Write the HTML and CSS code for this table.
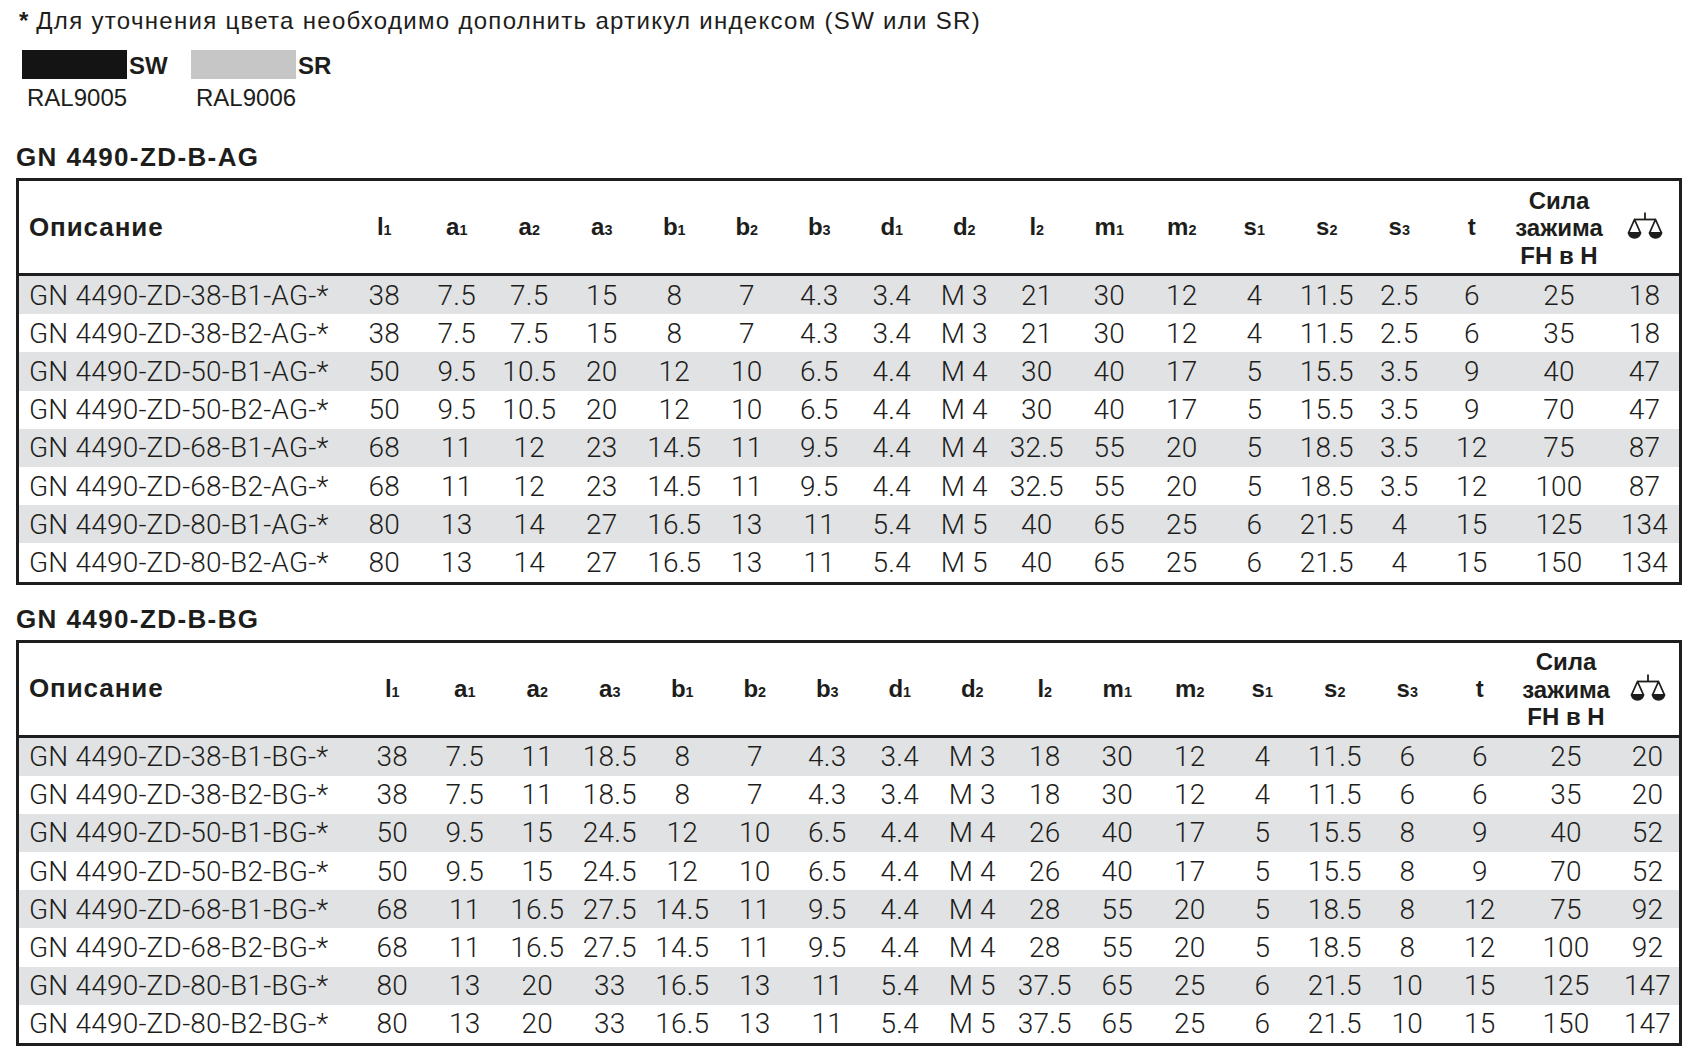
FILE: index.html
```html
<!DOCTYPE html>
<html lang="ru">
<head>
<meta charset="utf-8">
<title>GN 4490-ZD</title>
<link rel="stylesheet" href="styles.css">
</head>
<body>
<div class="page">
  <p class="note"><b class="star">*</b> Для уточнения цвета необходимо дополнить артикул индексом (SW или SR)</p>
  <div class="swatches">
    <div class="swatch">
      <div class="swatch-row"><span class="chip chip-black"></span><span class="code">SW</span></div>
      <div class="ral">RAL9005</div>
    </div>
    <div class="swatch">
      <div class="swatch-row"><span class="chip chip-silver"></span><span class="code">SR</span></div>
      <div class="ral">RAL9006</div>
    </div>
  </div>

  <h2 class="heading heading-first">GN 4490-ZD-B-AG</h2>
  <table class="spec spec-ag">
    <colgroup>
      <col class="c-desc"><col class="c-num"><col class="c-num"><col class="c-num"><col class="c-num"><col class="c-num"><col class="c-num"><col class="c-num"><col class="c-num"><col class="c-num"><col class="c-num"><col class="c-num"><col class="c-num"><col class="c-num"><col class="c-num"><col class="c-num"><col class="c-num"><col class="c-force"><col class="c-weight">
    </colgroup>
    <thead>
      <tr>
        <th class="th-desc">Описание</th>
        <th>l<span class="ix">1</span></th><th>a<span class="ix">1</span></th><th>a<span class="ix">2</span></th><th>a<span class="ix">3</span></th>
        <th>b<span class="ix">1</span></th><th>b<span class="ix">2</span></th><th>b<span class="ix">3</span></th><th>d<span class="ix">1</span></th>
        <th>d<span class="ix">2</span></th><th>l<span class="ix">2</span></th><th>m<span class="ix">1</span></th><th>m<span class="ix">2</span></th>
        <th>s<span class="ix">1</span></th><th>s<span class="ix">2</span></th><th>s<span class="ix">3</span></th><th>t</th>
        <th class="th-force">Сила<br>зажима<br>FH в H</th>
        <th class="th-weight"><svg class="scale-icon" viewBox="0 0 36 30" width="36" height="30" aria-label="вес"><g fill="none" stroke="#1d1d1b" stroke-width="1.8" stroke-linejoin="round"><path d="M18 0.5V7.5"/><path d="M7.5 7.5H28.5"/><path d="M7.5 7.5L1.5 21H13.5Z"/><path d="M28.5 7.5L22.5 21H34.5Z"/></g><g fill="#1d1d1b"><path d="M0.8 20.6H14.2A6.7 6.2 0 0 1 0.8 20.6Z"/><path d="M21.8 20.6H35.2A6.7 6.2 0 0 1 21.8 20.6Z"/></g></svg></th>
      </tr>
    </thead>
    <tbody>
      <tr><td class="td-desc">GN 4490-ZD-38-B1-AG-*</td><td>38</td><td>7.5</td><td>7.5</td><td>15</td><td>8</td><td>7</td><td>4.3</td><td>3.4</td><td>M 3</td><td>21</td><td>30</td><td>12</td><td>4</td><td>11.5</td><td>2.5</td><td>6</td><td>25</td><td>18</td></tr>
      <tr><td class="td-desc">GN 4490-ZD-38-B2-AG-*</td><td>38</td><td>7.5</td><td>7.5</td><td>15</td><td>8</td><td>7</td><td>4.3</td><td>3.4</td><td>M 3</td><td>21</td><td>30</td><td>12</td><td>4</td><td>11.5</td><td>2.5</td><td>6</td><td>35</td><td>18</td></tr>
      <tr><td class="td-desc">GN 4490-ZD-50-B1-AG-*</td><td>50</td><td>9.5</td><td>10.5</td><td>20</td><td>12</td><td>10</td><td>6.5</td><td>4.4</td><td>M 4</td><td>30</td><td>40</td><td>17</td><td>5</td><td>15.5</td><td>3.5</td><td>9</td><td>40</td><td>47</td></tr>
      <tr><td class="td-desc">GN 4490-ZD-50-B2-AG-*</td><td>50</td><td>9.5</td><td>10.5</td><td>20</td><td>12</td><td>10</td><td>6.5</td><td>4.4</td><td>M 4</td><td>30</td><td>40</td><td>17</td><td>5</td><td>15.5</td><td>3.5</td><td>9</td><td>70</td><td>47</td></tr>
      <tr><td class="td-desc">GN 4490-ZD-68-B1-AG-*</td><td>68</td><td>11</td><td>12</td><td>23</td><td>14.5</td><td>11</td><td>9.5</td><td>4.4</td><td>M 4</td><td>32.5</td><td>55</td><td>20</td><td>5</td><td>18.5</td><td>3.5</td><td>12</td><td>75</td><td>87</td></tr>
      <tr><td class="td-desc">GN 4490-ZD-68-B2-AG-*</td><td>68</td><td>11</td><td>12</td><td>23</td><td>14.5</td><td>11</td><td>9.5</td><td>4.4</td><td>M 4</td><td>32.5</td><td>55</td><td>20</td><td>5</td><td>18.5</td><td>3.5</td><td>12</td><td>100</td><td>87</td></tr>
      <tr><td class="td-desc">GN 4490-ZD-80-B1-AG-*</td><td>80</td><td>13</td><td>14</td><td>27</td><td>16.5</td><td>13</td><td>11</td><td>5.4</td><td>M 5</td><td>40</td><td>65</td><td>25</td><td>6</td><td>21.5</td><td>4</td><td>15</td><td>125</td><td>134</td></tr>
      <tr><td class="td-desc">GN 4490-ZD-80-B2-AG-*</td><td>80</td><td>13</td><td>14</td><td>27</td><td>16.5</td><td>13</td><td>11</td><td>5.4</td><td>M 5</td><td>40</td><td>65</td><td>25</td><td>6</td><td>21.5</td><td>4</td><td>15</td><td>150</td><td>134</td></tr>
    </tbody>
  </table>

  <h2 class="heading">GN 4490-ZD-B-BG</h2>
  <table class="spec spec-bg">
    <colgroup>
      <col class="c-desc"><col class="c-num"><col class="c-num"><col class="c-num"><col class="c-num"><col class="c-num"><col class="c-num"><col class="c-num"><col class="c-num"><col class="c-num"><col class="c-num"><col class="c-num"><col class="c-num"><col class="c-num"><col class="c-num"><col class="c-num"><col class="c-num"><col class="c-force"><col class="c-weight">
    </colgroup>
    <thead>
      <tr>
        <th class="th-desc">Описание</th>
        <th>l<span class="ix">1</span></th><th>a<span class="ix">1</span></th><th>a<span class="ix">2</span></th><th>a<span class="ix">3</span></th>
        <th>b<span class="ix">1</span></th><th>b<span class="ix">2</span></th><th>b<span class="ix">3</span></th><th>d<span class="ix">1</span></th>
        <th>d<span class="ix">2</span></th><th>l<span class="ix">2</span></th><th>m<span class="ix">1</span></th><th>m<span class="ix">2</span></th>
        <th>s<span class="ix">1</span></th><th>s<span class="ix">2</span></th><th>s<span class="ix">3</span></th><th>t</th>
        <th class="th-force">Сила<br>зажима<br>FH в H</th>
        <th class="th-weight"><svg class="scale-icon" viewBox="0 0 36 30" width="36" height="30" aria-label="вес"><g fill="none" stroke="#1d1d1b" stroke-width="1.8" stroke-linejoin="round"><path d="M18 0.5V7.5"/><path d="M7.5 7.5H28.5"/><path d="M7.5 7.5L1.5 21H13.5Z"/><path d="M28.5 7.5L22.5 21H34.5Z"/></g><g fill="#1d1d1b"><path d="M0.8 20.6H14.2A6.7 6.2 0 0 1 0.8 20.6Z"/><path d="M21.8 20.6H35.2A6.7 6.2 0 0 1 21.8 20.6Z"/></g></svg></th>
      </tr>
    </thead>
    <tbody>
      <tr><td class="td-desc">GN 4490-ZD-38-B1-BG-*</td><td>38</td><td>7.5</td><td>11</td><td>18.5</td><td>8</td><td>7</td><td>4.3</td><td>3.4</td><td>M 3</td><td>18</td><td>30</td><td>12</td><td>4</td><td>11.5</td><td>6</td><td>6</td><td>25</td><td>20</td></tr>
      <tr><td class="td-desc">GN 4490-ZD-38-B2-BG-*</td><td>38</td><td>7.5</td><td>11</td><td>18.5</td><td>8</td><td>7</td><td>4.3</td><td>3.4</td><td>M 3</td><td>18</td><td>30</td><td>12</td><td>4</td><td>11.5</td><td>6</td><td>6</td><td>35</td><td>20</td></tr>
      <tr><td class="td-desc">GN 4490-ZD-50-B1-BG-*</td><td>50</td><td>9.5</td><td>15</td><td>24.5</td><td>12</td><td>10</td><td>6.5</td><td>4.4</td><td>M 4</td><td>26</td><td>40</td><td>17</td><td>5</td><td>15.5</td><td>8</td><td>9</td><td>40</td><td>52</td></tr>
      <tr><td class="td-desc">GN 4490-ZD-50-B2-BG-*</td><td>50</td><td>9.5</td><td>15</td><td>24.5</td><td>12</td><td>10</td><td>6.5</td><td>4.4</td><td>M 4</td><td>26</td><td>40</td><td>17</td><td>5</td><td>15.5</td><td>8</td><td>9</td><td>70</td><td>52</td></tr>
      <tr><td class="td-desc">GN 4490-ZD-68-B1-BG-*</td><td>68</td><td>11</td><td>16.5</td><td>27.5</td><td>14.5</td><td>11</td><td>9.5</td><td>4.4</td><td>M 4</td><td>28</td><td>55</td><td>20</td><td>5</td><td>18.5</td><td>8</td><td>12</td><td>75</td><td>92</td></tr>
      <tr><td class="td-desc">GN 4490-ZD-68-B2-BG-*</td><td>68</td><td>11</td><td>16.5</td><td>27.5</td><td>14.5</td><td>11</td><td>9.5</td><td>4.4</td><td>M 4</td><td>28</td><td>55</td><td>20</td><td>5</td><td>18.5</td><td>8</td><td>12</td><td>100</td><td>92</td></tr>
      <tr><td class="td-desc">GN 4490-ZD-80-B1-BG-*</td><td>80</td><td>13</td><td>20</td><td>33</td><td>16.5</td><td>13</td><td>11</td><td>5.4</td><td>M 5</td><td>37.5</td><td>65</td><td>25</td><td>6</td><td>21.5</td><td>10</td><td>15</td><td>125</td><td>147</td></tr>
      <tr><td class="td-desc">GN 4490-ZD-80-B2-BG-*</td><td>80</td><td>13</td><td>20</td><td>33</td><td>16.5</td><td>13</td><td>11</td><td>5.4</td><td>M 5</td><td>37.5</td><td>65</td><td>25</td><td>6</td><td>21.5</td><td>10</td><td>15</td><td>150</td><td>147</td></tr>
    </tbody>
  </table>
</div>
</body>
</html>
```

FILE: styles.css
```css
html, body {
  margin: 0;
  padding: 0;
  background: #ffffff;
}

body {
  font-family: "Liberation Sans", Arial, sans-serif;
  color: #1d1d1b;
}

.page {
  width: 1666px;
  padding-left: 16px;
}

.note {
  margin: 0;
  padding: 6px 0 0 3px;
  font-size: 24px;
  line-height: 30px;
  letter-spacing: 1.3px;
  white-space: nowrap;
}

.star {
  font-weight: bold;
  letter-spacing: 0;
}

.swatches {
  display: flex;
  margin-top: 14px;
  padding-left: 6px;
}

.swatch {
  width: 169px;
}

.swatch-row {
  display: flex;
  align-items: flex-start;
}

.chip {
  display: block;
  width: 105px;
  height: 29px;
}

.chip-black {
  background: #141414;
}

.chip-silver {
  background: #c6c6c6;
}

.code {
  padding-top: 1px;
  padding-left: 2px;
  font-size: 24px;
  line-height: 29px;
  font-weight: bold;
}

.ral {
  margin-top: 3px;
  padding-left: 5px;
  font-size: 24px;
  line-height: 30px;
}

.heading {
  margin: 0;
  padding: 21px 0 8px 0;
  font-size: 26px;
  line-height: 26px;
  font-weight: bold;
  letter-spacing: 1.4px;
}

.heading-first {
  margin-top: 10px;
}

.spec {
  width: 1666px;
  table-layout: fixed;
  border-collapse: separate;
  border-spacing: 0;
  border: 3px solid #1e1e1e;
}

.spec-ag .c-desc { width: 329px; }
.spec-ag .c-force { width: 102px; }
.spec-ag .c-weight { width: 69px; }
.spec-bg .c-desc { width: 337px; }
.spec-bg .c-force { width: 100px; }
.spec-bg .c-weight { width: 63px; }
.c-num { width: 72.5px; }

.spec th {
  height: 90px;
  padding: 0;
  border-bottom: 3px solid #1e1e1e;
  font-family: "Liberation Sans", Arial, sans-serif;
  font-weight: bold;
  font-size: 24px;
  text-align: center;
  vertical-align: middle;
  color: #1d1d1b;
}

.spec th.th-desc {
  text-align: left;
  padding-left: 10px;
  font-size: 26px;
  letter-spacing: 0.9px;
}

.ix {
  font-size: 0.6em;
}

.spec th.th-force {
  font-size: 24px;
  line-height: 27.5px;
  padding-top: 2px;
}

.scale-icon {
  display: block;
  margin: 0 auto;
}

.spec td {
  height: 38.2px;
  padding: 0;
  font-family: Roboto, "Liberation Sans", sans-serif;
  font-weight: 300;
  font-size: 28px;
  letter-spacing: 0.2px;
  text-align: center;
  vertical-align: middle;
  color: #1d1d1b;
  white-space: nowrap;
}

.spec td.td-desc {
  text-align: left;
  padding-left: 10px;
}

.spec tbody tr:nth-child(odd) td {
  background: #e1e2e4;
}
```
